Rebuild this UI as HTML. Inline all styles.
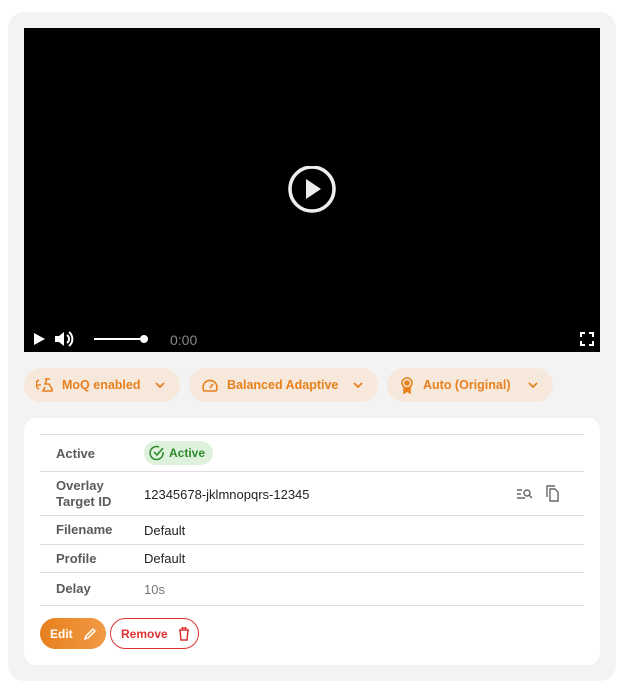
<!DOCTYPE html>
<html><head><meta charset="utf-8"><style>
*{box-sizing:border-box;margin:0;padding:0}
body{width:622px;height:693px;background:#fff;font-family:"Liberation Sans",sans-serif;position:relative;overflow:hidden}
.outer{position:absolute;left:8px;top:12px;width:608px;height:669px;background:#f3f3f3;border-radius:16px}
.video{position:absolute;left:24px;top:28px;width:576px;height:324px;background:#000}
.chip{position:absolute;top:368px;height:34px;border-radius:17px;background:#f6e8da;color:#e8801e;font-size:12.5px;font-weight:bold;display:flex;align-items:center;padding-left:12px}
.chip svg{margin-right:8px}
.chip .cv{position:absolute;right:14px;top:11px;margin:0}
.card{position:absolute;left:24px;top:418px;width:576px;height:247px;background:#fff;border-radius:12px}
.line{position:absolute;left:40px;width:544px;height:1px;background:#dedede}
.lbl{position:absolute;left:56px;font-size:13px;color:#5a5a5a;font-weight:bold;line-height:16px}
.val{position:absolute;left:144px;font-size:13px;color:#222;line-height:16px}
</style></head><body>
<div class="outer"></div>
<div class="video">
<svg style="position:absolute;left:264px;top:138px" width="48" height="48" viewBox="0 0 48 48"><circle cx="24" cy="23" r="22" fill="none" stroke="#eee" stroke-width="3.5"/><path d="M18 13 L33 23 L18 33Z" fill="#eee"/></svg>
<svg style="position:absolute;left:8px;top:304px" width="14" height="14"><path d="M2 1 L13 7 L2 13Z" fill="#fff"/></svg>
<svg style="position:absolute;left:30px;top:302px" width="22" height="18" viewBox="0 0 22 18"><path d="M1 6h4l5-4v14l-5-4H1z" fill="#fff"/><path d="M13 5a5 5 0 0 1 0 8M15 2a9 9 0 0 1 0 14" stroke="#fff" stroke-width="2" fill="none"/></svg>
<div style="position:absolute;left:70px;top:310px;width:50px;height:2px;background:#fff"></div>
<div style="position:absolute;left:116px;top:307px;width:8px;height:8px;border-radius:50%;background:#fff"></div>
<div style="position:absolute;left:146px;top:304px;color:#888;font-size:14px">0:00</div>
<svg style="position:absolute;left:556px;top:304px" width="14" height="14"><path d="M1 5V1h4M9 1h4v4M13 9v4H9M5 13H1V9" stroke="#fff" stroke-width="2" fill="none"/></svg>
</div>
<div class="chip" style="left:24px;width:156px"><svg width="18" height="16" viewBox="0 0 18 16" fill="none" stroke="#e8801e" stroke-width="1.6"><path d="M3 3a5 5 0 0 0 0 9M1 8h4M9 2h5M11 2l-2 5h4l3 5v2H7l2-4"/></svg>MoQ enabled<svg class="cv" width="12" height="12"><path d="M2 4l4 4 4-4" stroke="#e8801e" stroke-width="1.8" fill="none"/></svg></div>
<div class="chip" style="left:189px;width:189px"><svg width="18" height="16" viewBox="0 0 18 16" fill="none" stroke="#e8801e" stroke-width="1.6"><path d="M3 14a7 7 0 1 1 12 0z"/><path d="M9 11l3-4"/></svg>Balanced Adaptive<svg class="cv" width="12" height="12"><path d="M2 4l4 4 4-4" stroke="#e8801e" stroke-width="1.8" fill="none"/></svg></div>
<div class="chip" style="left:387px;width:166px"><svg width="16" height="18" viewBox="0 0 16 18" fill="none" stroke="#e8801e" stroke-width="1.6"><circle cx="8" cy="7" r="5"/><path d="M5 11v6l3-2 3 2v-6" fill="#e8801e"/><circle cx="8" cy="7" r="2" fill="#e8801e"/></svg>Auto (Original)<svg class="cv" width="12" height="12"><path d="M2 4l4 4 4-4" stroke="#e8801e" stroke-width="1.8" fill="none"/></svg></div>
<div class="card"></div>
<div class="line" style="top:434px"></div>
<div class="line" style="top:471px"></div>
<div class="line" style="top:515px"></div>
<div class="line" style="top:544px"></div>
<div class="line" style="top:572px"></div>
<div class="line" style="top:605px"></div>
<div class="lbl" style="top:446px">Active</div>
<div style="position:absolute;left:144px;top:441px;width:69px;height:24px;border-radius:12px;background:#ddf1dd;color:#2e8a2e;font-size:12px;font-weight:bold;display:flex;align-items:center;padding-left:5px"><svg width="16" height="16" viewBox="0 0 16 16" fill="none" stroke="#2e8a2e" stroke-width="1.5" style="margin-right:4px"><path d="M14 7A6.5 6.5 0 1 1 10 2"/><path d="M5 7l3 3 6-7"/></svg>Active</div>
<div class="lbl" style="top:478px">Overlay<br>Target ID</div>
<div class="val" style="top:487px">12345678-jklmnopqrs-12345</div>
<svg style="position:absolute;left:516px;top:487px" width="18" height="14" viewBox="0 0 18 14" fill="none" stroke="#666" stroke-width="1.4"><path d="M1 3h5M1 7h4M1 11h8"/><circle cx="11" cy="6" r="3"/><path d="M13 8l3 3"/></svg>
<svg style="position:absolute;left:546px;top:485px" width="14" height="17" viewBox="0 0 14 17" fill="none" stroke="#666" stroke-width="1.4"><path d="M1 12V1h8"/><path d="M4 4h5l3 3v9H4z"/></svg>
<div class="lbl" style="top:522px">Filename</div><div class="val" style="top:523px">Default</div>
<div class="lbl" style="top:551px">Profile</div><div class="val" style="top:551px">Default</div>
<div class="lbl" style="top:581px">Delay</div><div class="val" style="top:582px;color:#777">10s</div>
<div style="position:absolute;left:40px;top:618px;width:66px;height:31px;border-radius:16px;background:linear-gradient(90deg,#e8801e,#f19a45);color:#fff;font-size:12px;font-weight:bold;display:flex;align-items:center;padding-left:10px">Edit<svg style="margin-left:10px" width="14" height="14" viewBox="0 0 14 14" fill="none" stroke="#fff" stroke-width="1.5"><path d="M2 12l1-3 7-7 2 2-7 7z"/></svg></div>
<div style="position:absolute;left:110px;top:618px;width:89px;height:31px;border-radius:16px;border:1px solid #d33;color:#d33;font-size:12px;font-weight:bold;display:flex;align-items:center;padding-left:10px">Remove<svg style="margin-left:10px" width="12" height="14" viewBox="0 0 12 14" fill="none" stroke="#d33" stroke-width="1.5"><path d="M1 3h10M4 3V1h4v2M2 3l1 10h6l1-10"/></svg></div>
</body></html>
